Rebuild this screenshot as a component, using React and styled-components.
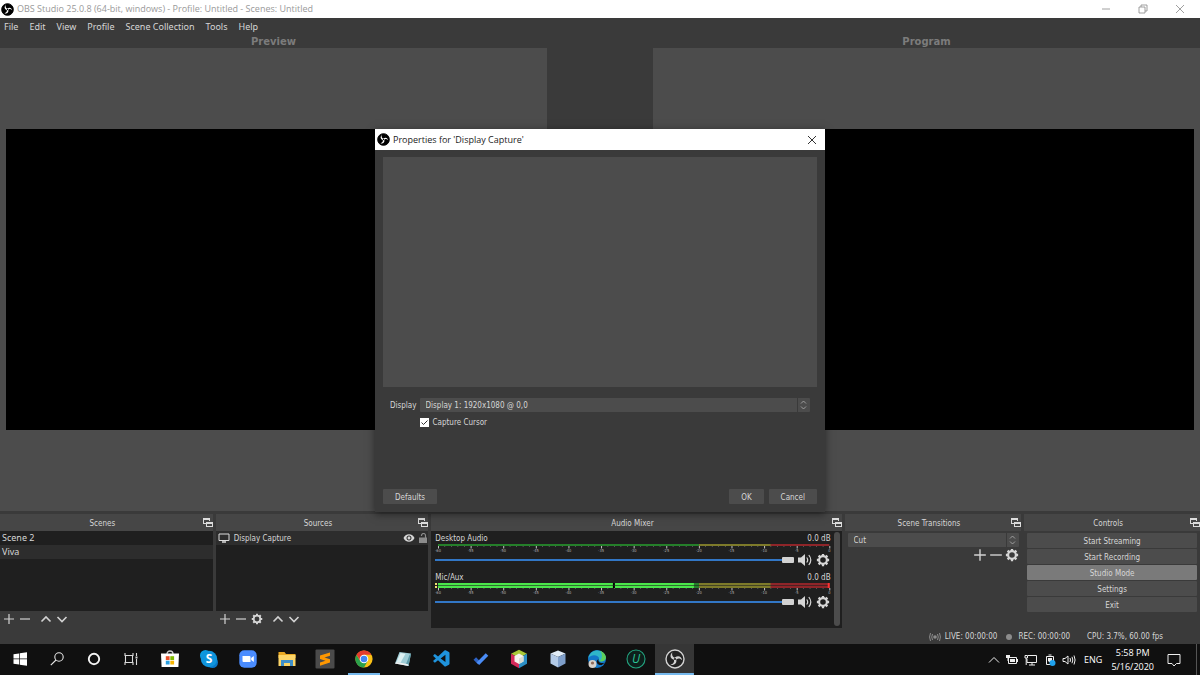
import styled, { createGlobalStyle, css } from 'styled-components';
import { VscVscode } from 'react-icons/vsc';
import { MdVisibility } from 'react-icons/md';

const scenes = ['Scene 2', 'Viva'];

const controls = ['Start Streaming', 'Start Recording', 'Studio Mode', 'Settings', 'Exit'];

const channels = [
    { id: 'desktop', name: 'Desktop Audio', db: '0.0 dB', live: false },
    { id: 'mic', name: 'Mic/Aux', db: '0.0 dB', live: true },
];

const menus = ['File', 'Edit', 'View', 'Profile', 'Scene Collection', 'Tools', 'Help'];

function ObsMark({ size, disc, ring, blade }) {
    return (
        <svg width={size} height={size} viewBox="0 0 20 20">
            <circle cx="10" cy="10" r="9" fill={disc} stroke={ring} strokeWidth="1.4" />
            {[0, 120, 240].map((r) => (
                <path
                    key={r}
                    transform={`rotate(${r} 10 10)`}
                    fill={blade}
                    d="M7.400 3.200C4.600 5.600 5 9.400 8.400 10.600C9.800 11 11.200 10.200 11.600 8.800C8.600 9.200 6.200 6.800 7.400 3.200z"
                />
            ))}
            <circle cx="10" cy="10" r="1.100" fill={disc} />
        </svg>
    );
}

function Line({ d, size = 12, width = 1.2, color = '#d2d2d2' }) {
    return (
        <svg width={size} height={size} viewBox="0 0 12 12" fill="none" stroke={color} strokeWidth={width}>
            <path d={d} />
        </svg>
    );
}

const PLUS = 'M6 1v10M1 6h10';
const MINUS = 'M1 6h10';
const UP = 'M1.5 8.5L6 4l4.5 4.5';
const DOWN = 'M1.5 4L6 8.5 10.5 4';
const CLOSE = 'M2 2l8 8M10 2l-8 8';

function Gear({ size }) {
    return (
        <svg width={size} height={size} viewBox="0 0 16 16" fill="none" stroke="#d6d6d6">
            <circle cx="8" cy="8" r="4.4" strokeWidth="2.4" />
            <path
                strokeWidth="2.6"
                d="M8 1v2.500M8 12.500V15M1 8h2.500M12.500 8H15M3 3l2 2M11 11l2 2M13 3l-2 2M5 11l-2 2"
            />
        </svg>
    );
}

function Speaker() {
    return (
        <svg width="16" height="14" viewBox="0 0 16 14" fill="none" stroke="#d6d6d6" strokeWidth="1.2">
            <path fill="#d6d6d6" stroke="none" d="M1 4.500h3L8 1v12L4 9.500H1z" />
            <path d="M9.700 4.500q2 2.500 0 5M11.800 2q4 5 0 10" />
        </svg>
    );
}

function PopOut() {
    return (
        <svg width="10" height="10" viewBox="0 0 10 10" fill="#dcdcdc">
            <path d="M0 0h7v3H6V2H1v3h2v1H0z" />
            <path fillRule="evenodd" d="M3 4h7v5H3zM4 6h5v2H4z" />
        </svg>
    );
}

function DockHead({ title }) {
    return (
        <DockTitle>
            <h2>{title}</h2>
            <BareButton aria-label={`Pop out ${title}`}>
                <PopOut />
            </BareButton>
        </DockTitle>
    );
}

function Combo({ id, value, label }) {
    return (
        <ComboBox>
            <select id={id} aria-label={label} defaultValue={value}>
                <option>{value}</option>
            </select>
            <svg width="13" height="14" viewBox="0 0 13 14" fill="none" stroke="#b0b0b0">
                <path d="M0.5 0v14" stroke="#3a3a3a" />
                <path d="M4 5.500l2.500-2.500L9 5.500M4 8.500l2.500 2.500L9 8.500" strokeWidth="0.8" />
            </svg>
        </ComboBox>
    );
}

function Meter({ live }) {
    const top = live ? 5 : 2;
    const ticks = Array.from({ length: 61 }, (_, i) => i);
    return (
        <MeterSvg height={live ? 12 : 9}>
            <rect x="0" width="66.7%" height={top} fill="#257f2a" />
            <rect x="66.7%" width="18.4%" height={top} fill="#7d7a2a" />
            <rect x="85%" width="15%" height={top} fill="#8f2529" />
            {live && (
                <>
                    <rect x="0" width="65.4%" height="5" fill="#4ae64a" />
                    <rect x="44.7%" width="2" height="5" fill="#000" />
                    <rect x="0" y="2" width="100%" height="1" fill="#1f1f1f" opacity="0.6" />
                    <rect x="-3" width="2" height="2" fill="#f0e070" />
                    <rect x="-3" y="3" width="2" height="2" fill="#f0e070" />
                    <rect x="99.6%" width="2" height="5" fill="#f33" />
                </>
            )}
            {ticks.map((t) => (
                <rect
                    key={t}
                    x={`${(t / 60) * 100}%`}
                    y={top}
                    width={t % 5 ? 0.6 : 1}
                    height={t % 5 ? 1 : 2.5}
                    fill={t % 5 ? '#7a7a7a' : '#c4c4c4'}
                />
            ))}
            {ticks
                .filter((t) => t % 5 === 0)
                .map((t) => (
                    <text key={t} x={`${(t / 60) * 100}%`} y={top + 6} textAnchor="middle">
                        {t - 60}
                    </text>
                ))}
        </MeterSvg>
    );
}

function Channel({ id, name, db, live }) {
    return (
        <ChannelBox>
            <ChannelName>
                <label htmlFor={id}>{name}</label>
                <span>{db}</span>
            </ChannelName>
            <Meter live={live} />
            <ChannelTools>
                <Fader id={id} type="range" defaultValue="100" />
                <BareButton aria-label={`Mute ${name}`}>
                    <Speaker />
                </BareButton>
                <BareButton aria-label={`${name} settings`}>
                    <Gear size={14} />
                </BareButton>
            </ChannelTools>
        </ChannelBox>
    );
}

const taskIcons = [
    {
        name: 'Start',
        art: <path fill="#fff" d="M3.500 5.200l5.600-.8v5.200H3.500zM9.800 4.300l7.200-1v6.300H9.800zM3.500 10.300h5.600v5.200l-5.600-.8zM9.800 10.300H17v6.400l-7.200-1z" />,
    },
    {
        name: 'Search',
        art: (
            <g fill="none" stroke="#e6e6e6" strokeWidth="1.1">
                <circle cx="12" cy="8" r="4.2" />
                <path d="M9 11l-5.200 5.200" />
            </g>
        ),
    },
    { name: 'Cortana', art: <circle cx="10" cy="10" r="5.2" fill="none" stroke="#f4f4f4" strokeWidth="1.9" /> },
    {
        name: 'Task View',
        art: (
            <g fill="none" stroke="#dcdcdc" strokeWidth="1.1">
                <path d="M4 4v2.500h8V4M4 16v-2.500h8V16M4.500 6.500v7M11.500 6.500v7M15.500 4v3M15.500 10v6" />
                <path d="M14.500 8.500h2" strokeWidth="2" />
            </g>
        ),
    },
    {
        name: 'Store',
        art: (
            <>
                <path d="M7 5c0-4 6-4 6 0" fill="none" stroke="#ccc" strokeWidth="1.3" />
                <path fill="#fff" d="M1 4.500h18l-.6 13.500H1.600z" />
                <path fill="#e8502a" d="M5.800 7.200h3.800V11H5.800z" />
                <path fill="#7fba00" d="M10.300 7.200h3.800V11h-3.800z" />
                <path fill="#2a9fe0" d="M5.800 11.700h3.800v3.800H5.800z" />
                <path fill="#f7b500" d="M10.300 11.700h3.800v3.800h-3.800z" />
            </>
        ),
    },
    {
        name: 'Skype',
        art: (
            <>
                <circle cx="6.500" cy="6.500" r="5.500" fill="#0a9be0" />
                <circle cx="13.500" cy="13.500" r="5.500" fill="#0a78c8" />
                <circle cx="10" cy="10" r="8.200" fill="#0f94dc" />
                <text x="10" y="14" textAnchor="middle" fontSize="12" fontWeight="700" fill="#fff">S</text>
            </>
        ),
    },
    {
        name: 'Zoom',
        art: (
            <>
                <rect x="1.300" y="1.300" width="17.400" height="17.400" rx="5" fill="#4a8cff" />
                <path fill="#fff" d="M4.500 7h7q1 0 1 1v5h-7q-1 0-1-1zM13.200 9l2.600-2v6l-2.600-2z" />
            </>
        ),
    },
    {
        name: 'File Explorer',
        art: (
            <>
                <path fill="#e9a823" d="M1.500 3h6l1.500 2h9.500v4h-17z" />
                <path fill="#fcd568" d="M1.500 6h17v11h-17z" />
                <path fill="#3f8fc9" d="M4 17v-6h12v6h-3v-3H7v3z" />
            </>
        ),
    },
    {
        name: 'Sublime Text',
        art: (
            <>
                <rect x="0.500" y="0.500" width="19" height="19" rx="1" fill="#4b4b4b" />
                <path fill="#ff9800" d="M5 6.600l10-3.200v3.300L9.500 8.500l5.500 1.800v3.300L5 16.800v-3.300l5.500-1.700L5 10z" />
            </>
        ),
    },
    {
        name: 'Chrome',
        open: true,
        art: (
            <>
                <circle cx="10" cy="10" r="8.600" fill="#fbc116" />
                <path fill="#e33b2e" d="M10 10L2.550 5.700A8.600 8.600 0 0 1 17.450 5.700H10z" />
                <path fill="#2aa14c" d="M2.550 5.700A8.600 8.600 0 0 0 10 18.600l3.700-6.500L10 14l-3.700-1.900z" />
                <path fill="#e33b2e" d="M2.550 5.700L6.300 12.100 10 10V5.700z" />
                <circle cx="10" cy="10" r="4.300" fill="#fff" />
                <circle cx="10" cy="10" r="3.300" fill="#4285f4" />
            </>
        ),
    },
    {
        name: 'Notepad',
        art: (
            <>
                <path fill="#9fcdd6" d="M6.500 3L18 4.500 15.500 17 2 14.500z" />
                <path fill="#dcf0f2" d="M7.500 4l5 .7-5 9-4-.8z" />
                <path fill="#5c9aa8" d="M16.500 6l1.500-1.500L15.500 17l-3-.6z" />
                <path fill="#f1f1f1" d="M2 14.500l1.500-1.600 11.500 2.300.5 1.800z" />
            </>
        ),
    },
    { name: 'Visual Studio Code', art: <VscVscode size={20} color="#1f93dc" /> },
    {
        name: 'To Do',
        art: (
            <>
                <path d="M3.800 9.500l4.400 4.400" stroke="#2d62c4" strokeWidth="3.600" fill="none" />
                <path d="M6.900 14.800L16 5.400" stroke="#4a8cf5" strokeWidth="3.600" fill="none" />
            </>
        ),
    },
    {
        name: 'NetBeans',
        art: (
            <>
                <path fill="#a9c938" d="M10 .8l8 4-8 4.200-8-4.200z" />
                <path fill="#d42a5a" d="M2 4.800L10 9v10.200l-8-4.500z" />
                <path fill="#2c8fc4" d="M18 4.800L10 9v10.200l8-4.500z" />
                <path fill="#f4f4ee" d="M10 4.500l4.500 2.500v5.500L10 15l-4.500-2.500V7z" />
                <path fill="#d9dcd0" d="M10 9.500l4.500-2.500v5.500L10 15z" />
            </>
        ),
    },
    {
        name: 'VirtualBox',
        art: (
            <>
                <path fill="#e2edf8" d="M10 1.500l7.500 3L10 8 2.500 4.500z" />
                <path fill="#b4cbe8" d="M2.500 4.500L10 8v10.500l-7.500-4z" />
                <path fill="#7f9fca" d="M17.500 4.500L10 8v10.500l7.500-4z" />
            </>
        ),
    },
    {
        name: 'Edge',
        art: (
            <>
                <circle cx="10" cy="10" r="9" fill="#1377c8" />
                <path fill="#2fb6c8" d="M1.400 9C3 .5 13-.6 17 4.600c3 4 1.500 8-2.500 8-3 0-3-1.500-2.500-2.600C13 6.500 5 4 1.400 9z" />
                <path fill="#5ed05a" d="M13 1.800c4.500 1.400 7.500 6.400 5 9-1.600 1.700-4 1.900-5.200 1.200 3-2.500 2.700-7 .2-10.200z" />
                <path fill="#111" d="M11.500 10c-1 3.500 3 5 6.300 3.600l-3 2.400c-4.500.5-7-3.500-3.300-6z" />
                <circle cx="5.500" cy="15" r="4" fill="#d8d2cc" />
                <circle cx="5.500" cy="14" r="1.600" fill="#8f6a5a" />
            </>
        ),
    },
    {
        name: 'IObit Uninstaller',
        art: (
            <>
                <circle cx="10" cy="10" r="9" fill="#0d1f1b" stroke="#23a37f" strokeWidth="1.100" />
                <text x="10" y="14" textAnchor="middle" fontSize="12" fontStyle="italic" fill="#2bc498">U</text>
            </>
        ),
    },
    {
        name: 'OBS Studio',
        open: true,
        active: true,
        art: <ObsMark size={20} disc="#222" ring="#d2d2d2" blade="#d2d2d2" />,
    },
];

function App() {
    return (
        <>
            <GlobalStyle />
            <Desktop>
                <TitleBar>
                    <ObsMark size={13} disc="#000" ring="#000" blade="#fff" />
                    <h1>OBS Studio 25.0.8 (64-bit, windows) - Profile: Untitled - Scenes: Untitled</h1>
                    <WindowButtons>
                        <BareButton aria-label="Minimize">
                            <Line d="M2 6h8" width={0.8} color="#888" />
                        </BareButton>
                        <BareButton aria-label="Restore">
                            <Line d="M2 4h6v6H2zM4 4V2h6v6H8" width={0.8} color="#888" />
                        </BareButton>
                        <BareButton aria-label="Close">
                            <Line d={CLOSE} width={0.8} color="#888" />
                        </BareButton>
                    </WindowButtons>
                </TitleBar>
                <MenuBar>
                    {menus.map((m) => (
                        <BareButton key={m}>{m}</BareButton>
                    ))}
                </MenuBar>

                <Stage>
                    <Screen>
                        <h2>Preview</h2>
                        <ScreenArea>
                            <Canvas />
                        </ScreenArea>
                    </Screen>
                    <Screen>
                        <h2>Program</h2>
                        <ScreenArea>
                            <Canvas />
                        </ScreenArea>
                    </Screen>
                </Stage>

                <Docks>
                    <Dock>
                        <DockHead title="Scenes" />
                        <List>
                            {scenes.map((s) => (
                                <SceneRow key={s} $on={s === 'Viva'}>
                                    {s}
                                </SceneRow>
                            ))}
                        </List>
                        <ListTools>
                            <BareButton aria-label="Add scene"><Line d={PLUS} /></BareButton>
                            <BareButton aria-label="Remove scene"><Line d={MINUS} /></BareButton>
                            <Spacer />
                            <BareButton aria-label="Move scene up"><Line d={UP} width={1.6} /></BareButton>
                            <BareButton aria-label="Move scene down"><Line d={DOWN} width={1.6} /></BareButton>
                        </ListTools>
                    </Dock>
                    <Dock>
                        <DockHead title="Sources" />
                        <List>
                            <SourceRow>
                                <svg width="12" height="10" viewBox="0 0 12 10" fill="none" stroke="#ddd">
                                    <path d="M1 1h10v6.500H1z" />
                                    <path d="M4 9h4" strokeWidth="1.5" />
                                </svg>
                                <span>Display Capture</span>
                                <MdVisibility size={12} />
                                <svg width="8" height="10" viewBox="0 0 8 10" fill="none">
                                    <path fill="#8c8c8c" d="M0 4.500h8V10H0z" />
                                    <path d="M2.500 3V2.500a2 2 0 0 1 4 0V5" stroke="#8c8c8c" strokeWidth="1.2" />
                                </svg>
                            </SourceRow>
                        </List>
                        <ListTools>
                            <BareButton aria-label="Add source"><Line d={PLUS} /></BareButton>
                            <BareButton aria-label="Remove source"><Line d={MINUS} /></BareButton>
                            <BareButton aria-label="Source properties"><Gear size={12} /></BareButton>
                            <Spacer />
                            <BareButton aria-label="Move source up"><Line d={UP} width={1.6} /></BareButton>
                            <BareButton aria-label="Move source down"><Line d={DOWN} width={1.6} /></BareButton>
                        </ListTools>
                    </Dock>
                    <Dock>
                        <DockHead title="Audio Mixer" />
                        <Mixer>
                            <div>
                                {channels.map((c) => (
                                    <Channel key={c.id} {...c} />
                                ))}
                            </div>
                            <ScrollThumb />
                        </Mixer>
                    </Dock>
                    <Dock>
                        <DockHead title="Scene Transitions" />
                        <Transitions>
                            <Combo id="transition" label="Transition" value="Cut" />
                            <div>
                                <BareButton aria-label="Add transition"><Line d={PLUS} size={14} /></BareButton>
                                <BareButton aria-label="Remove transition"><Line d={MINUS} size={14} /></BareButton>
                                <BareButton aria-label="Transition properties"><Gear size={14} /></BareButton>
                            </div>
                        </Transitions>
                    </Dock>
                    <Dock>
                        <DockHead title="Controls" />
                        <ControlList>
                            {controls.map((c) => (
                                <PushButton key={c} $on={c === 'Studio Mode'}>
                                    {c}
                                </PushButton>
                            ))}
                        </ControlList>
                    </Dock>
                </Docks>

                <StatusBar>
                    <span>
                        <svg width="12" height="10" viewBox="0 0 12 10" fill="none" stroke="#8c8c8c">
                            <circle cx="6" cy="5" r="1.800" fill="#8c8c8c" stroke="none" />
                            <path d="M3.500 2q-1.500 3 0 6M8.500 2q1.500 3 0 6M1.500 1q-1.800 4 0 8M10.500 1q1.800 4 0 8" />
                        </svg>
                        LIVE: 00:00:00
                    </span>
                    <span>
                        <RecDot />
                        REC: 00:00:00
                    </span>
                    <span>CPU: 3.7%, 60.00 fps</span>
                </StatusBar>

                <Taskbar>
                    <TaskList>
                        {taskIcons.map((t) => (
                            <TaskButton key={t.name} aria-label={t.name} $open={t.open} $active={t.active}>
                                <svg width="20" height="20" viewBox="0 0 20 20">
                                    {t.art}
                                </svg>
                            </TaskButton>
                        ))}
                    </TaskList>
                    <Tray>
                        <Line d="M1 8.500l5-5 5 5" width={1} color="#eee" />
                        <svg width="14" height="12" viewBox="0 0 14 12" fill="none" stroke="#eee">
                            <path d="M3.500 3.500h8v6h-8zM12.500 5v3" />
                            <path fill="#eee" stroke="none" d="M5 5h5v3H5zM1 1h4v3H1zM2.500 4h1v3h-1z" />
                        </svg>
                        <svg width="14" height="12" viewBox="0 0 14 12" fill="none" stroke="#eee">
                            <path d="M4 1.500h8.500v7H3V5M5 11h6M8 8.500V11M1 1.500h2.500V4H1zM2.200 4v7" />
                        </svg>
                        <svg width="14" height="14" viewBox="0 0 14 14" fill="none" stroke="#eee">
                            <path d="M3.500 3.500h7v8h-7zM5.500 2h3" />
                            <path fill="#eee" stroke="none" d="M5 5h4v3L7 9.500 5 8z" />
                            <circle cx="9.500" cy="10" r="3" fill="#1fa2ee" stroke="none" />
                        </svg>
                        <svg width="14" height="12" viewBox="0 0 14 12" fill="none" stroke="#eee">
                            <path d="M1 4.500h2L6 2v8L3 7.500H1zM8 4q1 2 0 4M10 2.800q1.600 3.200 0 6.400M12 1.500q2.200 4.500 0 9" />
                        </svg>
                        <Language>ENG</Language>
                        <Clock>
                            <span>5:58 PM</span>
                            <span>5/16/2020</span>
                        </Clock>
                        <svg width="14" height="14" viewBox="0 0 14 14" fill="none" stroke="#eee">
                            <path d="M1 1.500h12v9H9.500L7 13l-2-2.500H1z" />
                        </svg>
                    </Tray>
                </Taskbar>

                <Dialog role="dialog" aria-label="Properties for 'Display Capture'">
                    <DialogTitle>
                        <ObsMark size={13} disc="#000" ring="#000" blade="#fff" />
                        <h2>Properties for 'Display Capture'</h2>
                        <BareButton aria-label="Close dialog">
                            <Line d={CLOSE} width={1} color="#333" />
                        </BareButton>
                    </DialogTitle>
                    <DialogBody>
                        <SourcePreview />
                        <Form>
                            <label htmlFor="display">Display</label>
                            <Combo id="display" value="Display 1: 1920x1080 @ 0,0" />
                            <CheckLabel>
                                <input type="checkbox" defaultChecked />
                                <span>Capture Cursor</span>
                            </CheckLabel>
                        </Form>
                        <DialogButtons>
                            <DialogButton>Defaults</DialogButton>
                            <Spacer $grow />
                            <DialogButton>OK</DialogButton>
                            <DialogButton>Cancel</DialogButton>
                        </DialogButtons>
                    </DialogBody>
                </Dialog>
            </Desktop>
        </>
    );
}

export default App;

const GlobalStyle = createGlobalStyle`
    * {
        box-sizing: border-box;
    }

    body {
        margin: 0;
        background: #3a3a3a;
        color: #d6d6d6;
        font-family: 'DejaVu Sans Condensed', 'DejaVu Sans', sans-serif;
        font-size: 8px;
        line-height: 12px;
    }

    h1, h2, ul {
        margin: 0;
        padding: 0;
        font-size: inherit;
        font-weight: normal;
        list-style: none;
    }

    button, select, input {
        margin: 0;
        font: inherit;
        color: inherit;
    }

    svg {
        display: block;
        flex: none;
    }
`;

const titleFont = css`
    font-family: 'Open Sans', 'Noto Sans', sans-serif;
    font-size: 9px;
`;

const menuFont = css`
    font-family: 'Noto Sans', 'Open Sans', sans-serif;
    font-size: 9px;
`;

const Desktop = styled.div`
    position: relative;
    display: flex;
    flex-direction: column;
    min-height: 100vh;
`;

const BareButton = styled.button`
    display: flex;
    align-items: center;
    justify-content: center;
    padding: 0;
    border: 0;
    background: none;
`;

const TitleBar = styled.header`
    ${titleFont}
    display: flex;
    align-items: center;
    gap: 3px;
    height: 18px;
    padding: 0 14px 0 1px;
    background: #fff;
    color: #999;
`;

const WindowButtons = styled.div`
    display: flex;
    gap: 25px;
    margin-left: auto;
`;

const MenuBar = styled.nav`
    ${menuFont}
    display: flex;
    gap: 11px;
    height: 17px;
    padding: 0 4px;
`;

const Stage = styled.main`
    flex: 1;
    display: grid;
    grid-template-columns: 1fr 1fr;
    gap: 106px;
`;

const Screen = styled.section`
    display: flex;
    flex-direction: column;

    h2 {
        font-family: 'DejaVu Sans', sans-serif;
        font-size: 10px;
        font-weight: bold;
        line-height: 13px;
        text-align: center;
        color: #7c7c7c;
    }
`;

const ScreenArea = styled.div`
    flex: 1;
    display: flex;
    align-items: center;
    padding: 0 6px;
    background: #4c4c4c;
`;

const Canvas = styled.div`
    flex: 1;
    aspect-ratio: 16 / 9;
    background: #000;
`;

const Docks = styled.div`
    display: grid;
    grid-template-columns: 213fr 213fr 411fr 177fr 176fr;
    gap: 3px;
    height: 117px;
    padding-top: 3px;
`;

const Dock = styled.section`
    display: flex;
    flex-direction: column;
    min-width: 0;
`;

const DockTitle = styled.div`
    display: grid;
    grid-template-columns: 1fr 10px;
    align-items: center;
    height: 17px;
    padding-left: 2px;
    background: #464646;
    text-align: center;

    h2 {
        padding-top: 2px;
    }
`;

const List = styled.ul`
    flex: 1;
    background: #1f1f1f;
`;

const SceneRow = styled.li`
    ${menuFont}
    height: 14px;
    padding-left: 2px;
    line-height: 14px;
    background: ${({ $on }) => ($on ? '#2d2d2d' : 'none')};
`;

const SourceRow = styled.li`
    display: flex;
    align-items: center;
    gap: 4px;
    height: 14px;
    padding: 0 1px 0 2px;
    background: #2d2d2d;

    span {
        flex: 1;
        padding-top: 2px;
    }
`;

const ListTools = styled.div`
    display: flex;
    align-items: center;
    gap: 4px;
    height: 17px;
    padding: 0 0 2px 3px;
`;

const Spacer = styled.span`
    flex: ${({ $grow }) => ($grow ? '1' : '0 0 1px')};
`;

const Mixer = styled.div`
    flex: 1;
    display: flex;
    gap: 3px;
    padding: 1px 2px 2px 4px;
    background: #1f1f1f;

    > div:first-child {
        flex: 1;
    }
`;

const ScrollThumb = styled.div`
    width: 6px;
    border-radius: 3px;
    background: #4c4c4c;
`;

const ChannelBox = styled.div`
    margin-bottom: 5px;
`;

const ChannelName = styled.div`
    display: flex;
    justify-content: space-between;
    height: 12px;
    line-height: 14px;
`;

const MeterSvg = styled.svg`
    width: calc(100% - 4px);
    margin-left: 3px;
    overflow: visible;

    text {
        font-size: 4px;
        fill: #b4b4b4;
    }
`;

const ChannelTools = styled.div`
    display: flex;
    align-items: center;
    gap: 3px;
    height: 13px;
    padding-right: 1px;
`;

const Fader = styled.input`
    flex: 1;
    min-width: 0;
    height: 6px;
    appearance: none;
    background: linear-gradient(#3277c6, #3277c6) center / 100% 2px no-repeat;

    &::-webkit-slider-thumb {
        appearance: none;
        width: 12px;
        height: 6px;
        border-radius: 1px;
        background: #d2d2d2;
    }
`;

const ComboBox = styled.div`
    position: relative;
    flex: 1;

    select {
        display: block;
        width: 100%;
        height: 14px;
        padding: 2px 16px 0 6px;
        border: 0;
        border-radius: 1px;
        appearance: none;
        background: #4c4c4c;
    }

    svg {
        position: absolute;
        top: 0;
        right: 0;
        pointer-events: none;
    }
`;

const Transitions = styled.div`
    padding: 2px 2px 2px 3px;

    > div:last-child {
        display: flex;
        justify-content: flex-end;
        gap: 2px;
        padding-top: 1px;
    }
`;

const ControlList = styled.div`
    display: flex;
    flex-direction: column;
    gap: 1px;
    padding: 2px 3px;
`;

const PushButton = styled.button`
    height: 15px;
    padding: 2px 0 0;
    border: 0;
    border-radius: 1px;
    background: ${({ $on }) => ($on ? '#7a7a7a' : '#4c4c4c')};
`;

const StatusBar = styled.footer`
    display: flex;
    align-items: center;
    justify-content: flex-end;
    gap: 9px;
    height: 16px;
    padding: 2px 37px 0 0;

    span {
        display: flex;
        align-items: center;
        gap: 4px;
    }

    > span:last-child {
        margin-left: 8px;
    }
`;

const RecDot = styled.i`
    width: 6px;
    height: 6px;
    margin-right: 2px;
    border-radius: 50%;
    background: #8c8c8c;
`;

const Taskbar = styled.div`
    ${titleFont}
    display: flex;
    justify-content: space-between;
    height: 31px;
    background: #101010;
    color: #fff;
`;

const TaskList = styled.div`
    flex: 0 1 694px;
    display: grid;
    grid-template-columns: repeat(3, 37px) repeat(15, 1fr);
    padding-left: 1px;
`;

const TaskButton = styled.button`
    display: flex;
    align-items: center;
    justify-content: center;
    padding: 0 0 1px;
    border: 0;
    background: ${({ $active }) => ($active ? '#363636' : 'none')};
    background-image: ${({ $open }) => ($open ? 'linear-gradient(#76b9ed, #76b9ed)' : 'none')};
    background-position: bottom;
    background-size: ${({ $active }) => ($active ? '100%' : '32px')} 2px;
    background-repeat: no-repeat;
`;

const Tray = styled.div`
    display: flex;
    align-items: center;
    gap: 5px;
    margin-right: 3px;
    padding-right: 15px;
    border-right: 1px solid #555;
`;

const Language = styled.span`
    margin: 0 4px 0 3px;
`;

const Clock = styled.div`
    display: flex;
    flex-direction: column;
    align-items: center;
    margin-right: 8px;
    line-height: 14px;
`;

const Dialog = styled.div`
    position: absolute;
    top: 129px;
    left: 50%;
    width: 450px;
    transform: translateX(-50%);
    background: #3a3a3a;
    box-shadow: 0 2px 8px rgba(0, 0, 0, 0.5);
`;

const DialogTitle = styled.div`
    ${titleFont}
    display: flex;
    align-items: center;
    gap: 3px;
    height: 21px;
    padding: 0 7px 0 2px;
    background: #fff;
    color: #222;

    button {
        margin-left: auto;
    }
`;

const DialogBody = styled.div`
    padding: 7px 8px 8px;
`;

const SourcePreview = styled.div`
    height: 230px;
    background: #4c4c4c;
`;

const Form = styled.div`
    display: grid;
    grid-template-columns: auto 1fr;
    align-items: center;
    align-content: start;
    gap: 3px;
    height: 102px;
    padding: 11px 7px 0;

    > label:first-child {
        padding-top: 2px;
    }
`;

const CheckLabel = styled.label`
    grid-column: 2;
    display: flex;
    align-items: center;
    gap: 4px;

    span {
        padding-top: 2px;
    }

    input {
        width: 9px;
        height: 9px;
        appearance: none;
        background: #fff;
    }

    input:checked {
        background: #fff
            url("data:image/svg+xml,%3Csvg xmlns='http://www.w3.org/2000/svg' viewBox='0 0 9 9'%3E%3Cpath d='M1.500 4.500l2 2 4-4' fill='none' stroke='%23333'/%3E%3C/svg%3E");
    }
`;

const DialogButtons = styled.div`
    display: flex;
    gap: 5px;
`;

const DialogButton = styled(PushButton)`
    padding: 2px 12px 0;
`;
